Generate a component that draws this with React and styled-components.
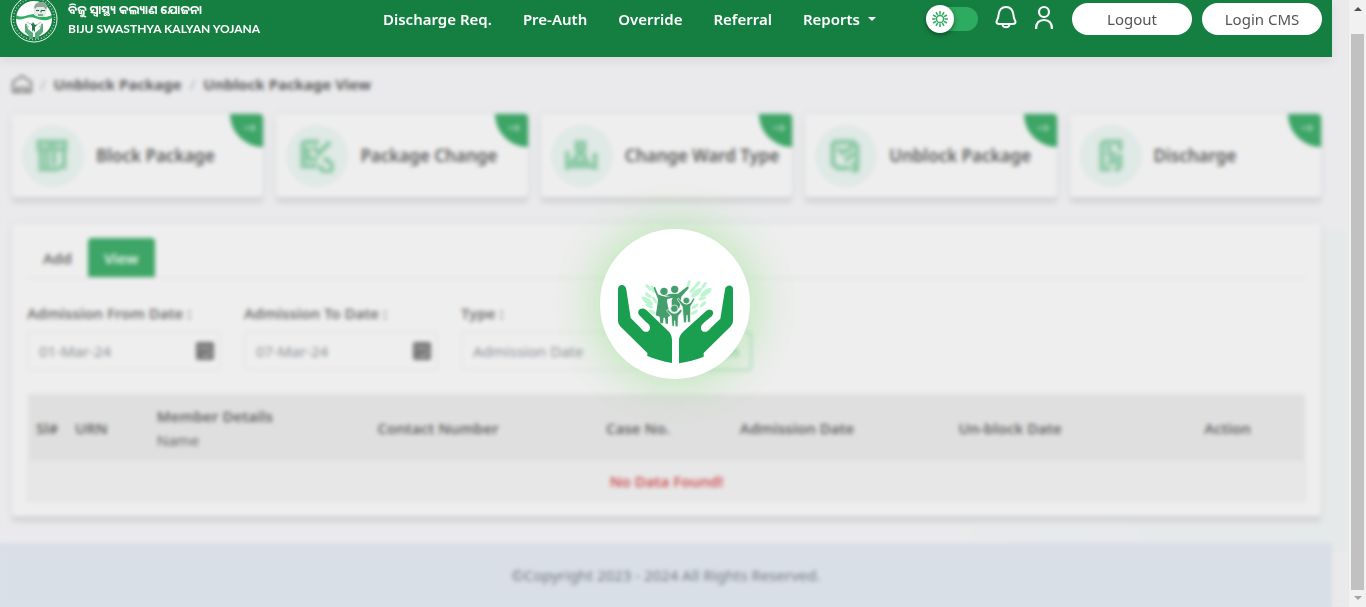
import React from "react";
import styled, { createGlobalStyle } from "styled-components";

const GlobalStyle = createGlobalStyle`
  * { box-sizing: border-box; }
  body {
    margin: 0;
    background: #eaeaec;
    color: #5c5c5c;
    font-family: "Noto Sans", "Open Sans", sans-serif;
    font-size: 15px;
    line-height: 24px;
  }
  button, input, select { font: inherit; }
  a { color: inherit; text-decoration: none; }
`;

const Shell = styled.div`
  display: flex;
  min-height: 100vh;
  overflow: hidden;
`;

const Page = styled.div`
  flex: 1;
  min-width: 0;
  display: flex;
  flex-direction: column;
  padding-right: 17px;
  background: linear-gradient(110deg, #e9eaeb, #e5e9e9) right 0 bottom 54px / 384px 324px no-repeat;
`;

const Header = styled.header`
  position: relative;
  z-index: 2;
  display: flex;
  align-items: center;
  height: 57px;
  padding: 0 10px 20px;
  background: #157f42;
  color: #fff;
  box-shadow: 0 4px 10px rgba(0, 0, 0, 0.07);
`;

const Brand = styled.a`
  display: flex;
  align-items: center;
  gap: 10px;
  width: 357px;
  flex-shrink: 0;
`;

const BrandText = styled.span`
  display: flex;
  flex-direction: column;
  font-family: Lato, "Noto Sans Oriya", sans-serif;
  font-size: 12px;
  font-weight: 700;
  line-height: 19px;
  white-space: nowrap;
`;

const Nav = styled.nav`
  display: flex;
  font-weight: 600;
  white-space: nowrap;
`;

const NavLink = styled.a`
  display: flex;
  align-items: center;
  gap: 8px;
  padding: 0 15px 0 16px;
`;

const Caret = styled.span`
  border: 4px solid transparent;
  border-top-color: #fff;
  border-bottom: 0;
`;

const Actions = styled.div`
  display: flex;
  align-items: center;
  gap: 14px;
  margin-left: auto;
`;

const ActionGroup = styled.div`
  display: flex;
  align-items: center;
  gap: 10px;
`;

const Toggle = styled.label`
  display: flex;
  align-items: center;
  width: 52px;
  height: 24px;
  border-radius: 12px;
  background: #2dab60;
  input {
    position: absolute;
    opacity: 0;
  }
`;

const Knob = styled.span`
  display: grid;
  place-items: center;
  width: 28px;
  height: 28px;
  flex-shrink: 0;
  border-radius: 50%;
  background: #fff;
  box-shadow: 0 2px 5px rgba(0, 0, 0, 0.4);
`;

const IconButton = styled.button`
  display: grid;
  place-items: center;
  width: 28px;
  padding: 0 0 4px;
  border: 0;
  background: none;
  color: inherit;
`;

const PillButton = styled.button`
  width: 120px;
  height: 32px;
  padding: 0;
  border: 0;
  border-radius: 16px;
  background: #fff;
  color: #555;
`;

const Main = styled.main`
  padding: 15px 11px 27px 12px;
`;

const Breadcrumb = styled.nav`
  display: flex;
  align-items: center;
  gap: 8px;
  height: 24px;
  font-weight: 700;
  svg { display: block; }
`;

const Slash = styled.span`
  color: #a9a9a9;
  font-weight: 400;
`;

const Cards = styled.div`
  display: grid;
  grid-template-columns: repeat(5, 1fr);
  gap: 13px;
  margin: 18px 0 27px;
`;

const Card = styled.a`
  position: relative;
  display: flex;
  align-items: center;
  gap: 12px;
  height: 83px;
  padding-left: 10px;
  border-radius: 4px;
  background: #eee;
  box-shadow: 0 6px 4px #d4d5d7, 0 0 8px #dcdfe3;
  font-size: 17px;
  font-weight: 600;
  white-space: nowrap;
`;

const CardIcon = styled.span`
  display: grid;
  place-items: center;
  width: 62px;
  height: 62px;
  border-radius: 50%;
  background: #dfe9e5;
  color: #8fcaa8;
`;

const Corner = styled.span`
  position: absolute;
  top: 0;
  right: 0;
  display: grid;
  place-items: center;
  width: 33px;
  height: 33px;
  padding: 0 0 6px 6px;
  border-radius: 0 4px 0 33px;
  background: #3da566;
  color: #b5dcc4;
`;

const Panel = styled.section`
  padding: 14px 15px;
  border-radius: 4px;
  background: #eee;
  box-shadow: 0 6px 4px #d4d5d7, 0 0 8px #dcdfe3;
`;

const Tabs = styled.div`
  display: flex;
  border-bottom: 2px solid #e6e6e6;
  margin-bottom: 22px;
`;

const Tab = styled.button`
  height: 39px;
  padding: 0 16px;
  border: 0;
  border-radius: 4px 4px 0 0;
  background: ${(p) => (p.$active ? "#3da566" : "transparent")};
  color: ${(p) => (p.$active ? "#e9f4ed" : "#6a6a6a")};
  font-weight: 600;
`;

const Filters = styled.form`
  display: flex;
  align-items: flex-end;
  gap: 23px;
`;

const Field = styled.label`
  display: flex;
  flex-direction: column;
  gap: 6px;
  width: 194px;
  color: #707070;
  font-weight: 600;
`;

const Control = styled.span`
  display: flex;
  align-items: center;
  height: 40px;
  padding: 0 5px 0 10px;
  border: 2px solid #e6e6e6;
  border-radius: 4px;
  color: #777;
  input, select {
    flex: 1;
    min-width: 0;
    padding: 0;
    border: 0;
    background: none;
    color: #8b9096;
    font-weight: 400;
  }
  select { appearance: none; }
`;

const SearchButton = styled.button`
  width: 74px;
  height: 40px;
  padding: 0;
  border: 2px solid #b7d8c4;
  border-radius: 4px;
  background: transparent;
  color: #5cb27e;
`;

const Table = styled.table`
  width: 100%;
  margin-top: 23px;
  border-collapse: collapse;
  table-layout: fixed;
  th {
    height: 67px;
    padding: 0 8px;
    background: #dfdfdf;
    text-align: left;
    font-weight: 600;
    color: #666;
    white-space: nowrap;
  }
  small {
    display: block;
    font-size: 15px;
    font-weight: 400;
  }
  td {
    height: 40px;
    padding: 0;
    border: 2px solid #e3e3e3;
    border-top: 0;
    background: #e7e7e7;
    color: #d0575a;
    font-weight: 600;
    text-align: center;
  }
`;

const Footer = styled.footer`
  flex: 1;
  min-height: 63px;
  padding-top: 20px;
  background: #d9dfe7;
  color: #777d84;
  text-align: center;
`;

const Overlay = styled.div`
  position: fixed;
  z-index: 1;
  inset: 0 17px 0 0;
  display: grid;
  place-items: center;
  backdrop-filter: blur(2px);
`;

const Loader = styled.div`
  width: 150px;
  height: 150px;
  border-radius: 50%;
  background: #fff;
  box-shadow: 0 0 50px rgba(130, 225, 115, 0.6);
  svg { display: block; }
`;

const ScrollTrack = styled.aside`
  position: relative;
  z-index: 3;
  display: flex;
  flex-direction: column;
  align-items: center;
  gap: 20px;
  width: 17px;
  padding: 7px 0;
  background: #f1f1f1;
`;

const ScrollArrow = styled.span`
  border: 4px solid transparent;
  border-top: 0;
  border-bottom-color: #505050;
  margin-bottom: 3px;
  ${(p) => p.$down && "transform: rotate(180deg); border-bottom-color: #a3a3a3; margin: 0;"}
`;

const ScrollThumb = styled.span`
  flex: 1;
  width: 13px;
  margin-bottom: -14px;
  background: #c1c1c1;
`;

const Logo = () => (
  <svg width="48" height="48" viewBox="0 0 48 48" aria-hidden="true">
    <circle cx="24" cy="24" r="23" fill="#157f42" stroke="#e9f5ee" strokeWidth="1" />
    <circle cx="24" cy="24" r="20.500" fill="none" stroke="#a5d0b6" strokeWidth="1.500" strokeDasharray="1 2" />
    <circle cx="24" cy="24" r="18" fill="#fff" />
    <path d="M6 20c8 5 14-4 23 0 5 3 9 2 13 0v3c-6 4-12 2-17 0-7-3-13 3-19 1z" fill="#2fae62" />
    <path d="M24 15c-1-6 2-8 7-8 4 0 7 3 6 8l-2 6c-4 2-8 1-11-1z" fill="#e3ebe6" />
    <path d="M24 12c2-6 11-7 13 0l-1 3-2-3-7 0-2 2z" fill="#8ba898" />
    <path d="M26 15.500h3m2 0h4m-4 0v2m-3 2.500h5" fill="none" stroke="#315c43" strokeWidth="1" />
    <path d="M15 30c0-2 2-2 2 0l1 4 5 4v6h-4v-3l-4-4zM33 30c0-2-2-2-2 0l-1 4-5 4v6h4v-3l4-4z" fill="#59a97a" />
    <path d="M20 28l2 3v6l1-2 2 2v-5l3-3-3 1-2-3-1 2z" fill="#257a49" />
    <path d="M17 27l3 2m11-2-3 2m-12 1 3 2m13-2-3 2" stroke="#94d4ae" />
  </svg>
);

const Sun = () => (
  <svg width="18" height="18" viewBox="0 0 18 18" fill="none" stroke="#2dab60" strokeWidth="1.500">
    <circle cx="9" cy="9" r="3.600" />
    {Array.from({ length: 12 }, (_, i) => (
      <path key={i} d="M9 1v3.400" transform={`rotate(${i * 30} 9 9)`} />
    ))}
  </svg>
);

const Bell = () => (
  <svg width="22" height="24" viewBox="0 0 22 24" fill="none" stroke="#fff" strokeWidth="2" strokeLinejoin="round">
    <path d="M11 2C6 2 4 6 3.500 10c0 4-2 5-2 7 0 1 1 2 3 2h13c2 0 3-1 3-2 0-2-2-3-2-7C18 6 16 2 11 2z" />
    <path d="M7.500 20c1 3 6 3 7 0" />
  </svg>
);

const Person = () => (
  <svg width="20" height="24" viewBox="0 0 20 24" fill="none" stroke="#fff" strokeWidth="2.200">
    <circle cx="10" cy="7" r="5" />
    <path d="M2 24c0-6 3-9 8-9s8 3 8 9" />
  </svg>
);

const Home = () => (
  <svg width="20" height="20" viewBox="0 0 20 20" fill="none" stroke="#777" strokeWidth="2">
    <path d="M1 8l9-6 9 6v10H1zM5 18v-4h10v4" />
  </svg>
);

const Calendar = () => (
  <svg width="18" height="18" viewBox="0 0 18 18">
    <rect width="18" height="18" rx="2" fill="currentColor" />
    <path d="M3 6h12M6 14h6l3-4" stroke="#bbb" strokeWidth="1.500" fill="none" />
  </svg>
);

const Arrow = () => (
  <svg width="12" height="8" viewBox="0 0 12 8" fill="none" stroke="currentColor" strokeWidth="1.500">
    <path d="M0 4h11M8 1l3 3-3 3" />
  </svg>
);

const GLYPHS = {
  block: <path d="M3 3h26v7H3zM5 12v18h18M11 12v16M18 12v14M12 8l8-4M28 12v18M23 28h6" />,
  change: <path d="M3 3h16M3 3v24h14M8 8v14M8 20h10M30 3L17 16M13 8l8 8M21 26a6 5 0 1 0 8-3l-5-4" />,
  ward: <path d="M2 12v19M2 27h28M30 14v17M7 23l7-8h4l4 8zM12 4h7v7h-7z" />,
  unblock: <path d="M4 3h20l4 4v23M4 3v22l5 4h12M9 9l5 5 10-7M16 22l9-8M25 23v8h5" />,
  discharge: <path d="M8 3h18v9M8 3v27h9M12 9h6M12 15h9M22 15l-6 8h8M20 30h6M26 15v15" />,
};

const CARDS = [
  ["Block Package", "block"],
  ["Package Change", "change"],
  ["Change Ward Type", "ward"],
  ["Unblock Package", "unblock"],
  ["Discharge", "discharge"],
];

const COLUMNS = [
  ["Sl#", 39],
  ["URN", 82],
  ["Member Details", 221],
  ["Contact Number", 229],
  ["Case No.", 134],
  ["Admission Date", 219],
  ["Un-block Date", 246],
  ["Action", 109],
];
const TOTAL = COLUMNS.reduce((sum, [, width]) => sum + width, 0);

const LEAVES = [
  [265, 292, 50], [265, 316, 35], [262, 333, 35], [284, 330, 60], [278, 298, 70], [276, 366, 30], [268, 348, 25],
  [398, 299, -50], [410, 308, -40], [432, 286, -55], [438, 307, -35], [427, 325, -20], [405, 349, -35], [429, 343, -40], [403, 367, -30], [412, 283, -50], [386, 282, -75],
];
const LARGE_LEAVES = [2, 8, 10];

const Hands = () => (
  <svg width="150" height="150" viewBox="120 117 450 450" role="img" aria-label="Loading">
    <g fill="#bdf5d2">
      {LEAVES.map(([x, y, angle], i) => {
        const r = LARGE_LEAVES.includes(i) ? 20 : 12;
        return <ellipse key={i} cx={x} cy={y} rx={r} ry={r * 0.4} transform={`rotate(${angle} ${x} ${y})`} />;
      })}
    </g>
    <g fill="#459f6c">
      <circle cx="312" cy="304" r="11" />
      <circle cx="344" cy="298" r="11" />
      <path d="M282 291q-2 3 2 12l10 24q-1 18-7 49l12 4 2 20h8l2-17h4l2 18h7v-20l6-3-9-43 1-8 18-4-2-6-20 3q-15-1-24-7l-9-22z" />
      <path d="M314 316l20-5h20l26-20q7-2 6 4l-22 25-2 18-5 18-9-8-13-1v-17l3-5-7-6z" />
      <g stroke="#fff" strokeWidth="2">
        <circle cx="379" cy="332" r="10" />
        <path d="M356 325q-5 0-3 5l14 20 4 48h8l2-23 2 22h8l1-48 11-19q2-7-3-7l-9 15q-11 9-23 0z" />
        <circle cx="343" cy="356" r="11" />
        <path d="M323 358q-5 2-1 7l12 13 2 31h7l1-17 2 18h8l1-32 11-14q1-7-5-5l-10 9q-8 4-16 0z" />
      </g>
    </g>
    <g fill="#1a9e50">
      <path d="M174 298C174 280 198 281 199 299L212 384 242 414C253 432 270 427 270 413 270 405 265 402 258 396L238 376C227 362 245 348 260 361L322 421C330 427 336 438 336 450V519Q295 512 262 498V489L182 410Q174 402 174 394z" />
      <path d="M519 298C519 282 497 284 495 299L481 386 452 414C440 432 422 427 423 413 423 406 427 402 434 396L456 378C468 362 448 353 436 365L371 424Q357 438 357 450V520Q400 512 431 500V489L511 410Q519 402 519 394z" />
    </g>
  </svg>
);

export default function App() {
  return (
    <>
      <GlobalStyle />
      <Shell>
        <Page>
          <Header>
            <Brand href="#">
              <Logo />
              <BrandText>
                <span lang="or">ବିଜୁ ସ୍ୱାସ୍ଥ୍ୟ କଲ୍ୟାଣ ଯୋଜନା</span>
                <span>BIJU SWASTHYA KALYAN YOJANA</span>
              </BrandText>
            </Brand>
            <Nav>
              <NavLink href="#">Discharge Req.</NavLink>
              <NavLink href="#">Pre-Auth</NavLink>
              <NavLink href="#">Override</NavLink>
              <NavLink href="#">Referral</NavLink>
              <NavLink href="#">Reports <Caret /></NavLink>
            </Nav>
            <Actions>
              <Toggle>
                <input type="checkbox" aria-label="Dark theme" />
                <Knob><Sun /></Knob>
              </Toggle>
              <ActionGroup>
                <IconButton aria-label="Notifications"><Bell /></IconButton>
                <IconButton aria-label="Profile"><Person /></IconButton>
              </ActionGroup>
              <ActionGroup>
                <PillButton>Logout</PillButton>
                <PillButton>Login CMS</PillButton>
              </ActionGroup>
            </Actions>
          </Header>
          <Main>
            <Breadcrumb aria-label="Breadcrumb">
              <a href="#" aria-label="Home"><Home /></a>
              <Slash>/</Slash>
              <a href="#">Unblock Package</a>
              <Slash>/</Slash>
              <span>Unblock Package View</span>
            </Breadcrumb>
            <Cards>
              {CARDS.map(([label, glyph]) => (
                <Card href="#" key={label}>
                  <CardIcon>
                    <svg width="34" height="34" viewBox="0 0 34 34" fill="none" stroke="currentColor" strokeWidth="5">
                      {GLYPHS[glyph]}
                    </svg>
                  </CardIcon>
                  {label}
                  <Corner><Arrow /></Corner>
                </Card>
              ))}
            </Cards>
            <Panel>
              <Tabs role="tablist">
                <Tab role="tab">Add</Tab>
                <Tab role="tab" $active aria-selected="true">View</Tab>
              </Tabs>
              <Filters onSubmit={(e) => e.preventDefault()}>
                <Field>
                  Admission From Date :
                  <Control><input defaultValue="01-Mar-24" /><Calendar /></Control>
                </Field>
                <Field>
                  Admission To Date :
                  <Control><input defaultValue="07-Mar-24" /><Calendar /></Control>
                </Field>
                <Field>
                  Type :
                  <Control><select><option>Admission Date</option></select></Control>
                </Field>
                <SearchButton>Search</SearchButton>
              </Filters>
              <Table>
                <colgroup>
                  {COLUMNS.map(([name, width]) => (
                    <col key={name} style={{ width: `${(width / TOTAL) * 100}%` }} />
                  ))}
                </colgroup>
                <thead>
                  <tr>
                    {COLUMNS.map(([name]) => (
                      <th key={name}>{name}{name === "Member Details" && <small>Name</small>}</th>
                    ))}
                  </tr>
                </thead>
                <tbody>
                  <tr><td colSpan={8}>No Data Found!</td></tr>
                </tbody>
              </Table>
            </Panel>
          </Main>
          <Footer>©Copyright 2023 - 2024 All Rights Reserved.</Footer>
        </Page>
        <ScrollTrack aria-hidden="true">
          <ScrollArrow />
          <ScrollThumb />
          <ScrollArrow $down />
        </ScrollTrack>
      </Shell>
      <Overlay><Loader><Hands /></Loader></Overlay>
    </>
  );
}
